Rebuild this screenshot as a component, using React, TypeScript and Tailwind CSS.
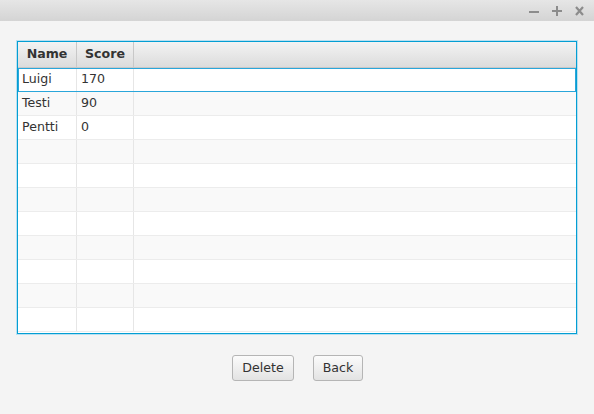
const rows = [
  { name: "Luigi", score: "170" },
  { name: "Testi", score: "90" },
  { name: "Pentti", score: "0" },
  ...Array.from({ length: 8 }, () => ({ name: "", score: "" })),
];

function TitleBar() {
  return (
    <div className="h-[21px] bg-gradient-to-b from-[#e6e6e6] to-[#d4d4d4] flex items-center justify-end gap-[13px] pr-[10px]">
      <svg width="10" height="10" viewBox="0 0 10 10">
        <rect x="0" y="5" width="10" height="2" fill="#8c8c8c" />
      </svg>
      <svg width="10" height="10" viewBox="0 0 10 10">
        <rect x="0" y="4" width="10" height="2" fill="#8c8c8c" />
        <rect x="4" y="0" width="2" height="10" fill="#8c8c8c" />
      </svg>
      <svg width="9" height="10" viewBox="0 0 9 10">
        <path d="M1 1 L8 9 M8 1 L1 9" stroke="#8c8c8c" strokeWidth="2.2" />
      </svg>
    </div>
  );
}

export default function App() {
  return (
    <div
      className="w-[594px] h-[414px] bg-[#f4f4f4] text-[#333333]"
      style={{ fontFamily: '"DejaVu Sans", sans-serif' }}
    >
      <TitleBar />
      <div className="ml-[17px] mt-[20px] w-[560px] h-[293px] border border-[#039ed3] shadow-[0_0_0_1px_#b9e0f1] bg-white flex flex-col">
        {/* header */}
        <div className="flex h-[26px] bg-gradient-to-b from-[#f3f3f3] to-[#dcdcdc] border-b border-[#c8c8c8] text-[12.6px] font-bold">
          <div className="w-[59px] border-r border-[#c8c8c8] flex items-center justify-center">Name</div>
          <div className="w-[57px] border-r border-[#c8c8c8] flex items-center justify-center">Score</div>
          <div className="flex-1" />
        </div>
        {rows.map((r, i) => (
          <div
            key={i}
            className={`flex h-[24px] border-b border-[#ececec] text-[12.6px] ${i % 2 === 1 ? "bg-[#f9f9f9]" : "bg-white"} ${i === 0 ? "outline outline-1 -outline-offset-1 outline-[#2aa6da]" : ""}`}
          >
            <div className="w-[59px] border-r border-[#e6e6e6] flex items-center pl-[4px]">{r.name}</div>
            <div className="w-[57px] border-r border-[#e6e6e6] flex items-center pl-[4px]">{r.score}</div>
            <div className="flex-1" />
          </div>
        ))}
      </div>
      <div className="flex justify-center gap-[19px] mt-[21px] pl-[1px]">
        <button className="w-[62px] h-[26px] rounded-[3px] border border-[#b5b5b5] bg-gradient-to-b from-[#fbfbfb] to-[#e3e3e3] text-[12.6px] text-[#333333]">
          Delete
        </button>
        <button className="w-[50px] h-[26px] rounded-[3px] border border-[#b5b5b5] bg-gradient-to-b from-[#fbfbfb] to-[#e3e3e3] text-[12.6px] text-[#333333]">
          Back
        </button>
      </div>
    </div>
  );
}
